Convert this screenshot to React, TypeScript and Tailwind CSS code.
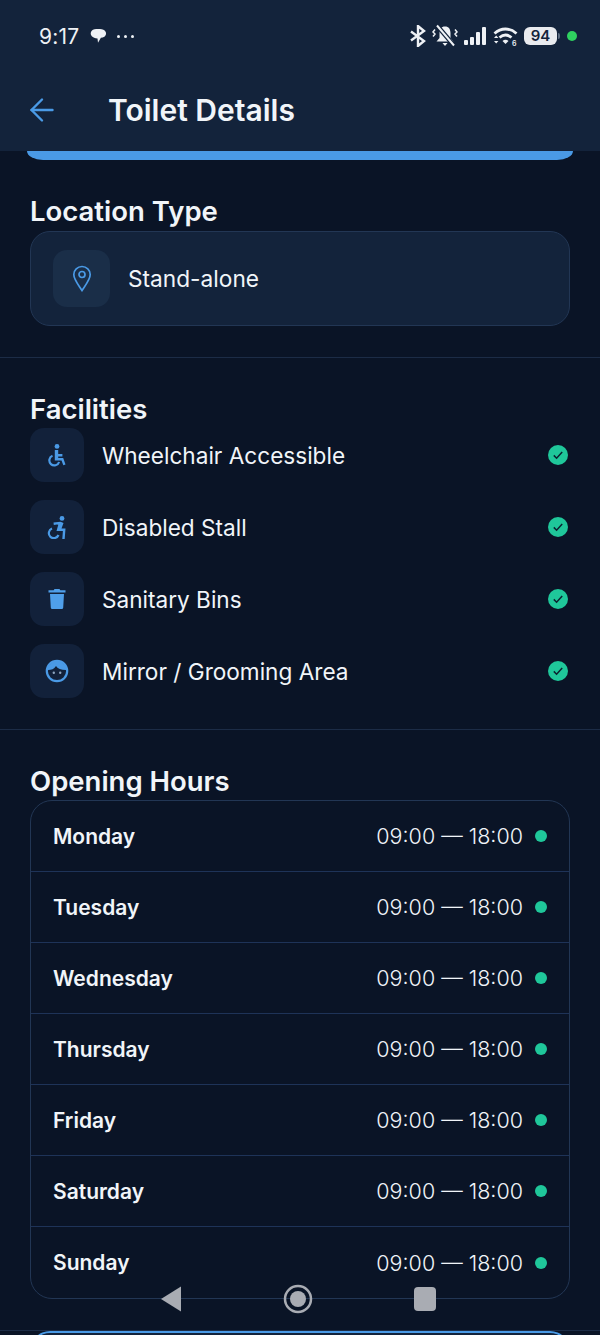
import { ArrowLeft } from "lucide-react"

const facilities = [
  { label: "Wheelchair Accessible", icon: <WheelchairIcon /> },
  { label: "Disabled Stall", icon: <ActiveWheelchairIcon /> },
  { label: "Sanitary Bins", icon: <BinIcon /> },
  { label: "Mirror / Grooming Area", icon: <FaceIcon /> },
]

const days = ["Monday", "Tuesday", "Wednesday", "Thursday", "Friday", "Saturday", "Sunday"]

function WheelchairIcon() {
  return (
    <svg width="24" height="24" viewBox="0 0 24 24" fill="#4a9ae6">
      <circle cx="12" cy="3.400" r="2.400" />
      <path d="M9.800 7h3.400v4h4.200v2.400h-4.200v1.600h5l2.300 6.500-2.200.8-1.800-4.900H9.800z" />
      <path d="M7.500 12.800a5 5 0 1 0 6.600 6.200" fill="none" stroke="#4a9ae6" strokeWidth="2.200" />
    </svg>
  )
}

function ActiveWheelchairIcon() {
  return (
    <svg width="24" height="24" viewBox="0 0 24 24" fill="#4a9ae6">
      <circle cx="17" cy="3.400" r="2.400" />
      <path d="M8.500 7.500l7-.7 3 1.200-2 5.500h4l-.8 10.500h-2.400l.6-8h-6.400l1.800-6.300-1.300-.3-3.200.7z" />
      <path d="M7 13.500a5 5 0 1 0 6.500 6.500" fill="none" stroke="#4a9ae6" strokeWidth="2.200" />
    </svg>
  )
}

function BinIcon() {
  return (
    <svg width="24" height="24" viewBox="0 0 24 24" fill="#4f9fea">
      <path d="M9.500 2h5l.8 1.200h5.200v2.300h-17V3.200h5.200z" />
      <path d="M5 7h14l-.8 13.800a1.400 1.400 0 0 1-1.400 1.200H7.200a1.400 1.400 0 0 1-1.400-1.200z" />
    </svg>
  )
}

function FaceIcon() {
  return (
    <svg width="24" height="24" viewBox="0 0 24 24" fill="none">
      <circle cx="12" cy="12" r="10.200" stroke="#4a9ae6" strokeWidth="2.200" />
      <path d="M3 11c3.500 0 6-1 8-4 1.500 2.600 5 4 10 4V7l-5-4H8L3 7z" fill="#4a9ae6" />
      <circle cx="8.800" cy="13.800" r="1.200" fill="#8fa6c0" />
      <circle cx="15.200" cy="13.800" r="1.200" fill="#8fa6c0" />
    </svg>
  )
}

function PinIcon() {
  return (
    <svg width="20" height="27" viewBox="0 0 20 27" fill="none" stroke="#4a9ae6" strokeWidth="1.700">
      <path d="M10 1.500c4.500 0 8.200 3.500 8.200 8 0 5-4.700 10.500-8.200 16C6.500 20 1.800 14.500 1.800 9.500c0-4.500 3.700-8 8.200-8z" />
      <circle cx="10" cy="9.500" r="3" />
    </svg>
  )
}

function CheckBadge() {
  return (
    <div className="flex h-5 w-5 items-center justify-center rounded-full bg-[#1fc79a]">
      <svg width="12" height="12" viewBox="0 0 12 12" fill="none" stroke="#0c2230" strokeWidth="1.500">
        <path d="M1.800 6.400l2.800 2.800 5.600-6.200" />
      </svg>
    </div>
  )
}

function StatusBar() {
  return (
    <div className="flex h-[72px] items-center justify-between pl-[39px] pr-[23px] text-[#eef1f5]">
      <div className="flex items-center">
        <span className="text-[21px] leading-none tracking-[0.2px]">9:17</span>
        <svg className="ml-[10px]" width="18" height="17" viewBox="0 0 18 17" fill="#eef1f5">
          <path d="M3 2.500C5 .6 13 .6 15.600 2.500c2 1.500 2 4.600-.2 6.200-1 .7-2.300 1-3.500 1.100L9 14.800 8.500 10.400C6 10.300 4 9.400 2.800 8.200 1.200 6.600 1.400 4 3 2.500z" />
        </svg>
        <div className="ml-[10px] flex gap-[4px]">
          <span className="h-[3px] w-[3px] rounded-full bg-[#eef1f5]" />
          <span className="h-[3px] w-[3px] rounded-full bg-[#eef1f5]" />
          <span className="h-[3px] w-[3px] rounded-full bg-[#eef1f5]" />
        </div>
      </div>
      <div className="flex items-center">
        <svg width="18" height="22" viewBox="0 0 18 22" fill="none" stroke="#eef1f5" strokeWidth="2.400">
          <path d="M2 6.500l13 9.500-6 5V1l6 5-13 9.500" />
        </svg>
        <svg className="ml-[5px]" width="26" height="24" viewBox="0 0 26 24" fill="none">
          <path d="M13 2.500c-3.800 0-5.500 2.700-5.500 6.500v5l-3 3.500h17l-3-3.500V9c0-3.800-1.700-6.500-5.500-6.500z" fill="#eef1f5" />
          <path d="M10.500 19h5L13 22z" fill="#eef1f5" />
          <path d="M5 1.500l17 20" stroke="#13233b" strokeWidth="4.500" />
          <path d="M5 1.500l17 20" stroke="#eef1f5" strokeWidth="2" />
          <path d="M3 5.500L1 8l2 2-2 2.500M23 5.500L25 8l-2 2 2 2.500" stroke="#eef1f5" strokeWidth="1.500" />
        </svg>
        <div className="ml-[6px] flex h-[18px] items-end gap-[1.5px]">
          <span className="h-[5px] w-[4.5px] rounded-[1px] bg-[#eef1f5]" />
          <span className="h-[8px] w-[4.5px] rounded-[1px] bg-[#eef1f5]" />
          <span className="h-[13px] w-[4.5px] rounded-[1px] bg-[#eef1f5]" />
          <span className="h-[18px] w-[4.5px] rounded-[1px] bg-[#eef1f5]" />
        </div>
        <svg className="ml-[7px]" width="25" height="20" viewBox="0 0 25 20" fill="none">
          <path d="M1.500 7.500c6.500-6 15.500-6 22 0" stroke="#eef1f5" strokeWidth="2.800" />
          <path d="M6.500 11.500c3.800-3.200 8.200-3.200 12 0" stroke="#eef1f5" strokeWidth="2.800" />
          <path d="M9.500 15c1.800-1.600 4.200-1.600 6 0l-3 3z" fill="#eef1f5" />
          <path d="M1 12l2.200-2.500L5.400 12zM1 15l2.200 2.500L5.400 15z" fill="#eef1f5" />
          <text x="19" y="19.500" fontSize="7" fontWeight="600" fill="#eef1f5">6</text>
        </svg>
        <div className="ml-[6px] flex h-[18px] w-[33px] items-center justify-center rounded-[6px] bg-[#e9ebef] text-[15px] font-semibold text-[#13233b]">
          94
        </div>
        <span className="ml-[1px] h-[6px] w-[2px] rounded-r-sm bg-[#5b6b80]" />
        <span className="ml-[7px] h-[10px] w-[10px] rounded-full bg-[#2fd160]" />
      </div>
    </div>
  )
}

export default function App() {
  return (
    <div className="relative h-[1335px] w-[600px] overflow-hidden bg-[#0a1426] font-['Inter',sans-serif] text-[#f1f5f9]">
      <header className="h-[151px] bg-[#13233b]">
        <StatusBar />
        <div className="flex items-center pl-[24px] pt-[20px]">
          <ArrowLeft size={36} strokeWidth={1.6} className="text-[#4a9ae6]" />
          <h1 className="ml-[48px] text-[30px] font-semibold leading-[36px]">Toilet Details</h1>
        </div>
      </header>
      <div className="mx-[27px] h-[9px] rounded-bl-[16px_9px] rounded-br-[16px_9px] bg-[#4a9ae6]" />

      <section className="px-[30px] pt-[34px]">
        <h2 className="text-[27.5px] font-semibold leading-[34px]">Location Type</h2>
        <div className="mt-[3px] flex h-[95px] items-center rounded-[20px] border border-[#223654] bg-[#13233b] pl-[22px]">
          <div className="flex h-[57px] w-[57px] items-center justify-center rounded-[14px] bg-[#1a2e48]">
            <PinIcon />
          </div>
          <span className="ml-[18px] mt-[2px] text-[22.7px] leading-none">Stand-alone</span>
        </div>
      </section>

      <div className="mt-[31px] h-px bg-[#1c2c46]" />

      <section className="px-[30px] pt-[34px]">
        <h2 className="text-[27.5px] font-semibold leading-[34px]">Facilities</h2>
        <ul className="mt-[2px] flex flex-col gap-[18px]">
          {facilities.map((f) => (
            <li key={f.label} className="flex h-[54px] items-center">
              <div className="flex h-[54px] w-[54px] items-center justify-center rounded-[14px] bg-[#12213a]">
                {f.icon}
              </div>
              <span className="ml-[18px] mt-[2px] text-[22.6px] leading-none">{f.label}</span>
              <div className="ml-auto mr-[2px]">
                <CheckBadge />
              </div>
            </li>
          ))}
        </ul>
      </section>

      <div className="mt-[31px] h-px bg-[#1c2c46]" />

      <section className="px-[30px] pt-[34px]">
        <h2 className="text-[27.5px] font-semibold leading-[34px]">Opening Hours</h2>
        <div className="mt-[2px] overflow-hidden rounded-[22px] border border-[#223654]">
          {days.map((day, i) => (
            <div
              key={day}
              className={`flex h-[71px] items-center pl-[22px] pr-[22px] ${i < days.length - 1 ? "border-b border-[#1e3358]" : ""}`}
            >
              <span className="text-[21px] font-semibold leading-none">{day}</span>
              <span className="ml-auto mt-[2px] text-[21.5px] font-light leading-none">09:00 — 18:00</span>
              <span className="ml-[12px] h-3 w-3 rounded-full bg-[#1fc79a]" />
            </div>
          ))}
        </div>
      </section>

      <div className="mt-[31px] h-px bg-[#1c2c46]" />
      <div className="mx-[30px] h-[20px] rounded-t-[20px] border-2 border-[#4a9ae6] bg-[#13233b]" />

      {/* system nav floats over the page */}
      <nav className="absolute left-0 top-[1284px] flex h-[30px] w-full items-center">
        <svg className="absolute left-[160px]" width="22" height="28" viewBox="0 0 22 28" fill="#a9acb3">
          <path d="M21 1.500v25L1 14z" />
        </svg>
        <svg className="absolute left-[283px]" width="30" height="32" viewBox="0 0 30 32" fill="none">
          <circle cx="15" cy="16" r="13" stroke="#a9acb3" strokeWidth="2.500" />
          <circle cx="15" cy="16" r="8" fill="#a9acb3" />
        </svg>
        <div className="absolute left-[414px] h-[24px] w-[22px] rounded-[4px] bg-[#a9acb3]" />
      </nav>
    </div>
  )
}
